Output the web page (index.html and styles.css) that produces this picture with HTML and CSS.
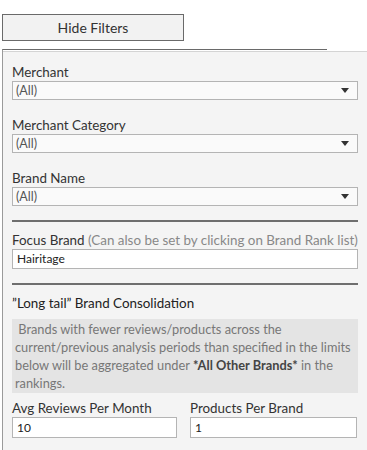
FILE: index.html
```html
<!DOCTYPE html>
<html>
<head>
<meta charset="utf-8">
<link rel="stylesheet" href="styles.css">
</head>
<body>
<div class="page">
  <button class="toggle">Hide Filters</button>
  <div class="frame">
    <div class="panel">
      <div class="field">
        <div class="label">Merchant</div>
        <div class="select"><span>(All)</span><span class="caret"></span></div>
      </div>
      <div class="field">
        <div class="label">Merchant Category</div>
        <div class="select"><span>(All)</span><span class="caret"></span></div>
      </div>
      <div class="field">
        <div class="label">Brand Name</div>
        <div class="select"><span>(All)</span><span class="caret"></span></div>
      </div>
      <div class="rule rule-a"></div>
      <div class="field focus">
        <div class="label">Focus Brand <span class="hint">(Can also be set by clicking on Brand Rank list)</span></div>
        <div class="input">Hairitage</div>
      </div>
      <div class="rule rule-b"></div>
      <div class="heading">”Long tail” Brand Consolidation</div>
      <div class="note">&nbsp;Brands with fewer reviews/products across the current/previous analysis periods than specified in the limits below will be aggregated under <b>*All Other Brands*</b> in the rankings.</div>
      <div class="pair">
        <div class="field">
          <div class="label">Avg Reviews Per Month</div>
          <div class="input">10</div>
        </div>
        <div class="field">
          <div class="label">Products Per Brand</div>
          <div class="input">1</div>
        </div>
      </div>
    </div>
  </div>
</div>
</body>
</html>
```
FILE: styles.css
```css
html, body {
  margin: 0;
  padding: 0;
  background: #ffffff;
  overflow: hidden;
}
body {
  font-family: "Lato", "Open Sans", sans-serif;
  color: #333;
  width: 367px;
  height: 450px;
}
.page {
  padding-top: 14px;
  padding-left: 2px;
}
.toggle {
  display: block;
  box-sizing: border-box;
  width: 182px;
  height: 27px;
  margin: 0;
  padding: 0;
  background: #f2f2f2;
  border: 1px solid #6a6a6a;
  font-family: "Lato", "Open Sans", sans-serif;
  font-size: 14px;
  font-weight: normal;
  color: #333;
}
.frame {
  margin-top: 8px;
  width: 325px;
  height: 420px;
  border-top: 1px solid #6a6a6a;
  border-left: 1px solid #9a9a9a;
  box-sizing: border-box;
}
.panel {
  margin-top: 1px;
  width: 370px;
  height: 410px;
  box-sizing: border-box;
  background: #f4f4f4;
  border-top: 1px solid #d4d4d4;
  padding: 12px 0 0 9px;
}
.panel > * {
  width: 346px;
}
.field {
  margin-bottom: 17px;
}
.label {
  font-size: 13.4px;
  line-height: 17px;
  height: 17px;
  color: #333;
  white-space: nowrap;
}
.hint {
  color: #888;
}
.select {
  box-sizing: border-box;
  height: 19px;
  border: 1px solid #b4b4b4;
  background: #fafafa;
  display: flex;
  align-items: center;
  justify-content: space-between;
  padding: 0 8px 0 3px;
  font-size: 12.5px;
  color: #555;
}
.caret {
  width: 0;
  height: 0;
  border-left: 4px solid transparent;
  border-right: 4px solid transparent;
  border-top: 5px solid #333;
}
.input {
  box-sizing: border-box;
  height: 20px;
  border: 1px solid #b4b4b4;
  background: #ffffff;
  padding: 0 4px;
  font-size: 12px;
  line-height: 18px;
  color: #222;
}
.rule {
  height: 2px;
  background: #6e6e6e;
}
.rule-a {
  margin-top: -3px;
  margin-bottom: 10px;
}
.focus {
  margin-bottom: 14px;
}
.rule-b {
  margin-bottom: 10px;
}
.heading {
  font-size: 13.4px;
  line-height: 17px;
  color: #222;
  margin-bottom: 7px;
}
.note {
  box-sizing: border-box;
  background: #e4e4e4;
  padding: 1px 0 1px 3px;
  font-size: 12.8px;
  line-height: 18px;
  color: #777;
  margin-bottom: 7px;
}
.note b {
  color: #444;
  font-weight: bold;
}
.pair {
  display: grid;
  grid-template-columns: 165px 167px;
  column-gap: 13px;
}
.pair .field {
  margin-bottom: 0;
}
.pair .input {
  height: 21px;
  line-height: 19px;
}
```
